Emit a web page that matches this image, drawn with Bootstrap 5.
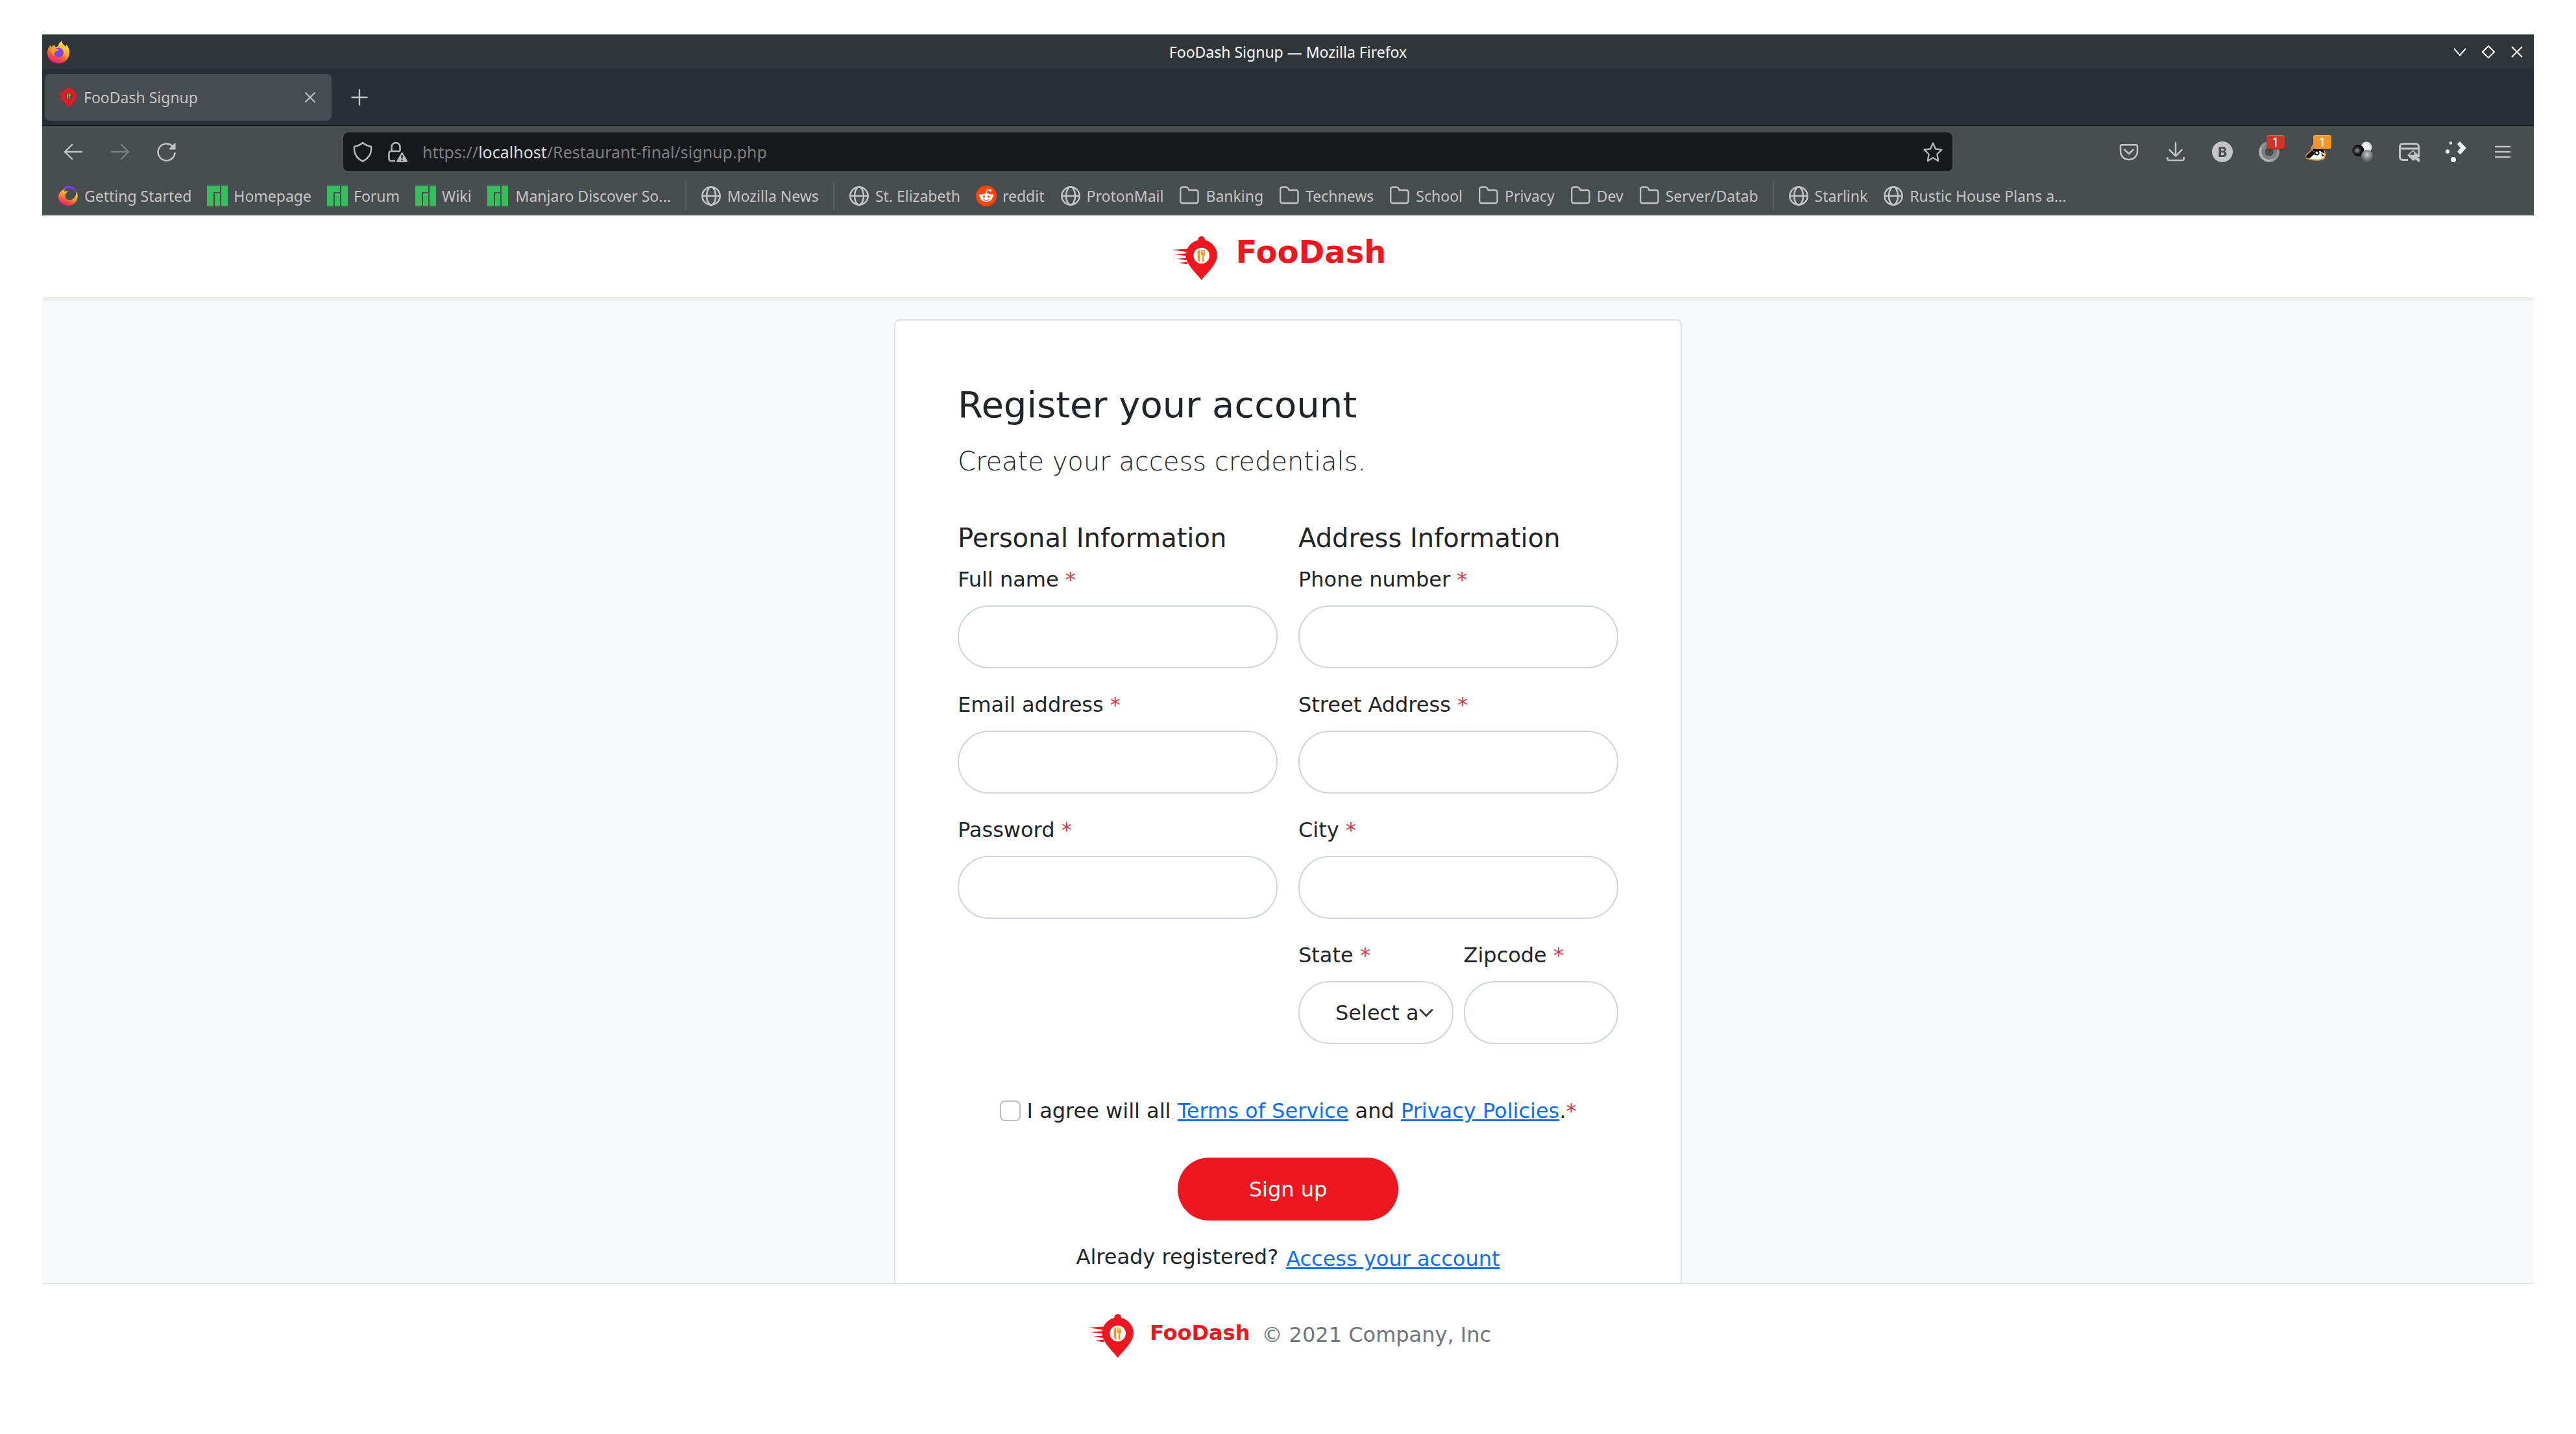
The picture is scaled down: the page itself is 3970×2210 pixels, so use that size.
<!DOCTYPE html>
<html lang="en">
<head>
<meta charset="utf-8">
<meta name="viewport" content="width=device-width, initial-scale=1">
<title>FooDash Signup</title>
<link href="https://cdn.jsdelivr.net/npm/bootstrap@5.3.0/dist/css/bootstrap.min.css" rel="stylesheet">
<style>
html{font-size:32px}
body{--bs-border-width:2px;font-family:"DejaVu Sans",sans-serif;background:#fff;color:#212529;min-height:100vh}
.win{margin:53px 65px 0}
.chrome-ui{font-family:"Noto Sans",sans-serif;font-size:23px;line-height:32px;color:#c4c4c4}
.chrome-ui button{background:none;border:0;padding:0;color:inherit;font:inherit}
.chrome-ui svg,.brand svg{display:block;flex:none}
.titlebar{height:53px;background:#31363b;color:#fcfcfc;border-top:1px solid #4a4e53;padding:0 8px;display:grid;grid-template-columns:1fr auto 1fr;align-items:center}
.titlebar .winbtns{gap:24px;padding-right:8px}
.tabstrip{height:88px;background:#2a2e36;border-bottom:1px solid #1c1e22;padding:8px 4px 7px}
.tab-item{--dish:#484d51;width:442px;height:72px;background:#484d51;border-radius:8px;padding:0 24px 0 16px;gap:11px}
.newtab{margin-left:30px}
.toolbar-main{background:#484d50;padding:10px 12px 0;height:80px}
.tool{width:72px;height:60px;display:flex;align-items:center;justify-content:center;position:relative}
.spring{flex:0 1 236px}
.urlbar{flex:1 1 0;height:60px;background:#18191c;border-radius:8px;box-shadow:0 0 0 2px #505458;padding:0 14px;gap:22px}
.urltext{color:#7c7f82;outline:0;font-size:25px}
.urltext b{font-weight:400;color:#dadbdc}
.count{position:absolute;left:32px;top:4px;width:28px;height:22px;border-radius:4px;color:#fff;font-size:20px;line-height:22px;text-align:center;box-shadow:inset 0 2px 0 rgba(255,255,255,.2),inset 0 -1px 0 rgba(0,0,0,.15),0 1px 2px rgba(0,0,0,.3)}
.count-red{background:#c8382b}
.count-orange{background:#f0962c}
.bookmarks{background:#484d50;height:58px;padding:0 12px;border-bottom:2px solid #505458}
.bm{display:flex;align-items:center;gap:9px;padding:0 12px;color:inherit;text-decoration:none;white-space:nowrap}
.bm-cut{gap:12px}
.vsep{width:2px;height:44px;background:#5d6165;margin:0 10px}
.site-head{height:126px;background:#fff;padding:32px 28px 0 0;box-shadow:0 4px 8px rgba(0,0,0,.075);clip-path:inset(0 0 -12px 0);position:relative}
.brand{color:#ee171f;font-weight:700;text-decoration:none;display:inline-flex;gap:28px}
.stage{background:#f7f9fb;padding-top:34px}
.signup{width:1214px;max-width:100%;background:#fff;border:2px solid #dee2e6;border-bottom:0;border-radius:8px 8px 0 0;padding:96px 96px 13px}
.signup h1{font-size:56px;margin-bottom:24px}
.signup .intro{font-size:40px;font-weight:200;line-height:60px;margin-bottom:64px}
.signup h2{font-size:40px;margin-bottom:16px}
.signup .form-label{line-height:48px;margin-bottom:16px;display:block}
.signup .form-control,.signup .form-select{height:97px;font-size:32px;border:2px solid #ced4da;border-radius:48px}
.signup .form-control{padding:16px 48px}
.signup .form-select{padding:16px 48px 16px 55px;background-size:32px 24px;background-position:right 24px center}
.fieldbox{margin-bottom:32px}
.req{color:#dc3545}
.signup a{color:#0d6efd}
.agree{gap:10px;margin-top:47px;line-height:48px}
.agree .form-check-input{width:32px;height:32px;margin:0;border:2px solid #bfbfbf;border-radius:8px;flex:none}
.btn-sign{width:340px;height:97px;border-radius:48px;background:#ee171f;color:#fff;font-size:32px;border:0;margin:48px auto 32px;display:block}
.btn-sign:hover{background:#d0141b;color:#fff}
.already{line-height:48px;gap:12px}
.already a{margin-top:3px}
.site-foot{border-top:2px solid #dee2e6;padding:46px 0 0 5px;color:#6c757d;line-height:48px;gap:18px}
.site-foot .brand{gap:24px}
.site-foot .note{padding-top:8px}
.site-foot .brand span{padding-top:5px}
</style>
<script src="https://cdn.jsdelivr.net/npm/bootstrap@5.3.0/dist/js/bootstrap.bundle.min.js"></script>
</head>
<body>
<svg width="0" height="0" class="position-absolute" aria-hidden="true">
<defs>
<linearGradient id="fx" x1=".8" y1="0" x2=".3" y2="1"><stop offset="0" stop-color="#fff44f"/><stop offset=".4" stop-color="#ffb02e"/><stop offset=".7" stop-color="#ff5a36"/><stop offset="1" stop-color="#e31587"/></linearGradient>
<radialGradient id="fxp"><stop offset="0" stop-color="#5b5bf0"/><stop offset="1" stop-color="#9a3be0"/></radialGradient>
<radialGradient id="bk" cx=".4" cy=".5"><stop offset="0" stop-color="#999"/><stop offset=".6" stop-color="#222"/><stop offset="1" stop-color="#000"/></radialGradient>
<radialGradient id="wh" cx=".5" cy=".45"><stop offset="0" stop-color="#fff"/><stop offset="1" stop-color="#d5d5d5"/></radialGradient>
<radialGradient id="gy" cx=".5" cy=".4"><stop offset="0" stop-color="#ccc"/><stop offset="1" stop-color="#666"/></radialGradient>
<symbol id="logo" viewBox="12 14 71 68"><g fill="#ee171f"><path d="M57.700 81.500C50 71 33.500 58 33.500 43.500a24.200 24.200 0 0 1 48.400 0C81.900 58 65.500 71 57.700 81.500z"/><circle cx="57.700" cy="19.300" r="5.300"/><path d="M12 35l24-1.500v5zM16 42l19-1.500v4zM20 48.700l16-1.500v4zM23 55l13-1.500v4z"/></g><circle cx="57.700" cy="44" r="12.300" style="fill:var(--dish,#fff)"/><path d="M55.300 35v18.500h-2.600V50h-1.200V40c0-3 1.500-5 3.800-5zM56.800 35h1.400v4.500h1v-4.500h1.400v4.500h1v-4.500h1.400V41c0 1.500-.8 2.500-1.800 2.800v9.700h-2.400v-9.700c-1.200-.3-2-1.300-2-2.800z" fill="#f7931e"/></symbol>
<symbol id="firefox" viewBox="0 0 34 35"><path d="M17 34.500C7 34.500 0 27.500 0 18.500c0-5 2-9 5-12 .2 1.500.8 2.500 1.800 3.200C8 7.500 9.500 6.500 11 6c-.2 2 .8 3.300 2.500 3.500l3-1.500c.5-3 2.500-6 5.500-8 0 4 3 5.500 6 9 .8-1 1-2 1-3.500 3.500 3.500 5 8 5 13 0 9-7 16-17 16z" fill="url(#fx)"/><circle cx="17.500" cy="18" r="7.500" fill="url(#fxp)"/><path d="M5 11c3-1 6-1 8 1.500 2 0 4 .5 4.500 1.500-1.500 2.500-5 2-6.500 4-1 2-.5 4 1 6C7 22 5 16 5 11z" fill="#ff9a20"/></symbol>
<symbol id="started" viewBox="0 0 32 32"><path d="M10 2c5-3 13-2 17 3s5 12 2 17c2-8-1-15-7-17-4-1.500-8-1-12 1z" fill="#7a3be8"/><path d="M11 5C5 8 1 12 1 18c0 8 7 13 15 13s14-6 14.500-13c.3-4-.5-7-2-9 .5 6-2 11-8 13-5 1-9-2-9-7 0-3 2-5 4-5-1-2-4-2-5 0-.5-2-.3-4 .5-5z" fill="url(#fx)"/></symbol>
<symbol id="manjaro" viewBox="0 0 32 32"><path d="M0 0h20v10H10v22H0zM12 12h8v20h-8zM22 0h10v32H22z" fill="#35bf5c"/></symbol>
<symbol id="globe" viewBox="0 0 32 32"><g fill="none" stroke="#c4c4c4" stroke-width="2.500"><circle cx="16" cy="16" r="13.700"/><ellipse cx="16" cy="16" rx="7" ry="13.700"/><path d="M2 16h28"/></g></symbol>
<symbol id="folder" viewBox="0 0 32 32"><path d="M2.200 24V5.500a3 3 0 0 1 3-3h6c1.500 0 2.500.7 3.200 2L15.500 7H26.500a3 3 0 0 1 3 3v14a3 3 0 0 1-3 3H5.200a3 3 0 0 1-3-3z" fill="none" stroke="#c4c4c4" stroke-width="2.300"/></symbol>
</defs>
</svg>

<div class="win">
<div class="chrome-ui">
  <div class="titlebar">
    <svg width="34" height="35"><use href="#firefox"/></svg>
    <span>FooDash Signup — Mozilla Firefox</span>
    <div class="winbtns d-flex justify-content-end">
      <button aria-label="Minimize"><svg width="20" height="20" fill="none" stroke="currentColor" stroke-width="2"><path d="M1 5l9 10 9-10"/></svg></button>
      <button aria-label="Maximize"><svg width="20" height="20" fill="none" stroke="currentColor" stroke-width="2"><path d="M10 1l9 9-9 9-9-9z"/></svg></button>
      <button aria-label="Close window"><svg width="20" height="20" fill="none" stroke="currentColor" stroke-width="2"><path d="M2 2l16 16M18 2L2 18"/></svg></button>
    </div>
  </div>
  <div class="tabstrip d-flex align-items-center">
    <div class="tab-item d-flex align-items-center">
      <svg width="33" height="32"><use href="#logo"/></svg>
      <span class="flex-grow-1">FooDash Signup</span>
      <button aria-label="Close tab"><svg width="18" height="18" fill="none" stroke="currentColor" stroke-width="2"><path d="M1.500 1.500l15 15M16.500 1.500l-15 15"/></svg></button>
    </div>
    <button class="newtab" aria-label="New tab"><svg width="26" height="26" fill="none" stroke="currentColor" stroke-width="2.400" stroke-linecap="round"><path d="M13 1.500v23M1.500 13h23"/></svg></button>
  </div>
  <div class="toolbar-main d-flex align-items-start">
    <button class="tool" aria-label="Back"><svg width="32" height="32" fill="none" stroke="currentColor" stroke-width="2.400" stroke-linecap="round" stroke-linejoin="round"><path d="M29 16H3M14 5L3 16l11 11"/></svg></button>
    <button class="tool" aria-label="Forward" disabled><svg width="32" height="32" fill="none" stroke="#7d8184" stroke-width="2.400" stroke-linecap="round" stroke-linejoin="round"><path d="M3 16h26M18 5l11 11-11 11"/></svg></button>
    <button class="tool" aria-label="Reload"><svg width="32" height="32"><path d="M28.500 18A13 13 0 1 1 24 6.500" fill="none" stroke="currentColor" stroke-width="2.500" stroke-linecap="round"/><path d="M29.500 3v9.500h-9c-.8 0-1-.8-.6-1.400l8.200-8.300c.6-.5 1.400-.4 1.400.2z" fill="currentColor"/></svg></button>
    <div class="spring"></div>
    <div class="urlbar d-flex align-items-center">
      <svg width="32" height="32" fill="none" stroke="#b4b5b6" stroke-width="2.500" stroke-linejoin="round"><path d="M16 2c3.500 3 8 5 13 6 .8 10-3.500 18-13 22.500C6.500 26 2.200 18 3 8c5-1 9.500-3 13-6z"/></svg>
      <svg width="32" height="32"><path d="M12 30H5.500a3 3 0 0 1-3-3V18a3 3 0 0 1 3-3h14.500M6.500 15V8.500a6.500 6.500 0 0 1 13 0V15" fill="none" stroke="#b4b5b6" stroke-width="2.500"/><path d="M21.500 17.500c.6-1 1.600-1 2.200 0l7.200 12.200c.6 1 .1 2.200-1.100 2.200H15.500c-1.200 0-1.700-1.200-1.100-2.200z" fill="#b4b5b6"/><path d="M22.600 21v5M22.600 28v2" stroke="#18191c" stroke-width="2.200"/></svg>
      <div class="urltext flex-grow-1" role="textbox" contenteditable="true" spellcheck="false" aria-label="Address">https://<b>localhost</b>/Restaurant-final/signup.php</div>
      <button aria-label="Bookmark this page"><svg width="32" height="32" fill="none" stroke="#b4b5b6" stroke-width="2.400" stroke-linejoin="round"><path d="M16 2.500l4 9 9.500 1.200-7 6.800L24 30l-8-5-8 5 1.500-10.500-7-6.800L12 11.500z"/></svg></button>
    </div>
    <div class="spring"></div>
    <button class="tool" aria-label="Save to Pocket"><svg width="32" height="32" fill="none" stroke="currentColor" stroke-width="2.500" stroke-linecap="round" stroke-linejoin="round"><path d="M5 5.200h22a2 2 0 0 1 2 2V15c0 8-6 13-13 13S3 23 3 15V7.200a2 2 0 0 1 2-2zM9 12.500l7 6.500 7-6.500"/></svg></button>
    <button class="tool" aria-label="Downloads"><svg width="32" height="32" fill="none" stroke="currentColor" stroke-width="2.500" stroke-linecap="round"><path d="M16 2v20M6.500 13l9.500 9.500 9.500-9.500M3.500 25v2a2 2 0 0 0 2 2h21a2 2 0 0 0 2-2v-2"/></svg></button>
    <button class="tool" aria-label="Account"><svg width="32" height="32"><circle cx="16" cy="16" r="16" fill="#c4c4c4"/><path fill-rule="evenodd" d="M10.500 8.500H17c3.200 0 5 1.500 5 4 0 1.600-.9 2.800-2.300 3.200 1.800.4 2.800 1.700 2.800 3.600 0 2.900-2 4.700-5.500 4.700h-6.500zM14 11.300v3h2.500c1.200 0 1.900-.5 1.900-1.500s-.7-1.500-1.900-1.500zM14 17v4.200h2.700c1.400 0 2.100-.7 2.100-2.100S18 17 16.700 17z" fill="#484d50"/></svg></button>
    <button class="tool" aria-label="Content blocker"><svg width="32" height="32"><circle cx="16" cy="16" r="11.500" fill="none" stroke="#969696" stroke-width="9"/><circle cx="16" cy="16" r="10" fill="none" stroke="#7d7d7d" stroke-width="4"/><path d="M4 10a13.500 13.500 0 0 0 18 18" fill="none" stroke="#b5b5b5" stroke-width="3"/></svg><span class="count count-red">1</span></button>
    <button class="tool" aria-label="Privacy Badger"><svg width="32" height="32"><path d="M1 21l8-7 2-8 6 5h10l4 9-3 7-9 2-10-1-7-2z" fill="#fff" stroke="#f08a24" stroke-width="2" stroke-linejoin="round"/><path d="M1 22l9-8 6 3-8 8-6 1zM11 11l8-1 9 2 1 7-6-4-6 0-6 0zM24 17l5 5-3 1z" fill="#111"/><circle cx="17.500" cy="17.500" r="3" fill="#fff" stroke="#111" stroke-width="2"/></svg><span class="count count-orange">1</span></button>
    <button class="tool" aria-label="Color extension"><svg width="32" height="32"><circle cx="22" cy="9" r="8.500" fill="url(#wh)"/><circle cx="9.500" cy="14" r="9" fill="url(#bk)"/><circle cx="23" cy="22" r="9" fill="url(#gy)"/></svg></button>
    <button class="tool" aria-label="Page cleaner"><svg width="32" height="32"><path d="M14 28.500H6A4.500 4.500 0 0 1 1.500 24V8A4.500 4.500 0 0 1 6 3.500h20A4.500 4.500 0 0 1 30.500 8v16M2 11h28" fill="none" stroke="currentColor" stroke-width="3"/><path d="M22 13l9 9-9 8-9-9z" fill="#c4c4c4"/><path d="M16 20.500l6-5.500 2 3-1.500 3z" fill="#484d50"/><path d="M26 25l5 4" stroke="#c4c4c4" stroke-width="5" stroke-linecap="round"/></svg></button>
    <button class="tool" aria-label="Extension"><svg width="32" height="32" fill="#f0f0f0"><circle cx="8" cy="2.500" r="2.200"/><circle cx="3" cy="15.500" r="3.200"/><circle cx="12" cy="28" r="4"/><path d="M18 4l4-4 10 10-9 10-5-4 5-6z"/></svg></button>
    <button class="tool" aria-label="Menu"><svg width="26" height="26" fill="none" stroke="currentColor" stroke-width="2.400" stroke-linecap="round"><path d="M2 5h22M2 13h22M2 21h22"/></svg></button>
  </div>
  <nav class="bookmarks d-flex align-items-center" aria-label="Bookmarks">
    <a class="bm" href="#"><svg width="32" height="32"><use href="#started"/></svg>Getting Started</a>
    <a class="bm" href="#"><svg width="32" height="32"><use href="#manjaro"/></svg>Homepage</a>
    <a class="bm" href="#"><svg width="32" height="32"><use href="#manjaro"/></svg>Forum</a>
    <a class="bm" href="#"><svg width="32" height="32"><use href="#manjaro"/></svg>Wiki</a>
    <a class="bm bm-cut" href="#"><svg width="32" height="32"><use href="#manjaro"/></svg>Manjaro Discover So...</a>
    <span class="vsep"></span>
    <a class="bm" href="#"><svg width="32" height="32"><use href="#globe"/></svg>Mozilla News</a>
    <span class="vsep"></span>
    <a class="bm" href="#"><svg width="32" height="32"><use href="#globe"/></svg>St. Elizabeth</a>
    <a class="bm" href="#"><svg width="32" height="32"><circle cx="16" cy="16" r="16" fill="#ff4500"/><g fill="#fff"><ellipse cx="16" cy="18.500" rx="9.500" ry="6.500"/><circle cx="7" cy="15.500" r="2.300"/><circle cx="25" cy="15.500" r="2.300"/><circle cx="22" cy="7.500" r="2"/></g><path d="M16 12l1.500-6 4.500 1.200" fill="none" stroke="#fff" stroke-width="1.200"/><circle cx="12.500" cy="17" r="1.700" fill="#ff4500"/><circle cx="19.500" cy="17" r="1.700" fill="#ff4500"/><path d="M12 21.500c2 1.700 6 1.700 8 0" fill="none" stroke="#ff4500" stroke-width="1.200"/></svg>reddit</a>
    <a class="bm" href="#"><svg width="32" height="32"><use href="#globe"/></svg>ProtonMail</a>
    <a class="bm" href="#"><svg width="32" height="32"><use href="#folder"/></svg>Banking</a>
    <a class="bm" href="#"><svg width="32" height="32"><use href="#folder"/></svg>Technews</a>
    <a class="bm" href="#"><svg width="32" height="32"><use href="#folder"/></svg>School</a>
    <a class="bm" href="#"><svg width="32" height="32"><use href="#folder"/></svg>Privacy</a>
    <a class="bm" href="#"><svg width="32" height="32"><use href="#folder"/></svg>Dev</a>
    <a class="bm" href="#"><svg width="32" height="32"><use href="#folder"/></svg>Server/Datab</a>
    <span class="vsep"></span>
    <a class="bm" href="#"><svg width="32" height="32"><use href="#globe"/></svg>Starlink</a>
    <a class="bm" href="#"><svg width="32" height="32"><use href="#globe"/></svg>Rustic House Plans a...</a>
  </nav>
</div>

<header class="site-head text-center">
  <a class="brand fs-4 lh-1" href="#"><svg width="71" height="68"><use href="#logo"/></svg><span>FooDash</span></a>
</header>

<main class="stage d-flex justify-content-center">
  <form class="signup" onsubmit="return false">
    <h1 class="fw-normal">Register your account</h1>
    <p class="intro">Create your access credentials.</p>
    <div class="row gx-3">
      <div class="col-6">
        <h2 class="fw-normal">Personal Information</h2>
        <div class="fieldbox"><label class="form-label" for="fname">Full name <span class="req">*</span></label><input class="form-control" id="fname" type="text"></div>
        <div class="fieldbox"><label class="form-label" for="email">Email address <span class="req">*</span></label><input class="form-control" id="email" type="email"></div>
        <div class="fieldbox"><label class="form-label" for="pass">Password <span class="req">*</span></label><input class="form-control" id="pass" type="password"></div>
      </div>
      <div class="col-6">
        <h2 class="fw-normal">Address Information</h2>
        <div class="fieldbox"><label class="form-label" for="phone">Phone number <span class="req">*</span></label><input class="form-control" id="phone" type="tel"></div>
        <div class="fieldbox"><label class="form-label" for="street">Street Address <span class="req">*</span></label><input class="form-control" id="street" type="text"></div>
        <div class="fieldbox"><label class="form-label" for="city">City <span class="req">*</span></label><input class="form-control" id="city" type="text"></div>
        <div class="row gx-2">
          <div class="col-6 fieldbox"><label class="form-label" for="state">State <span class="req">*</span></label><select class="form-select" id="state"><option>Select a State</option></select></div>
          <div class="col-6 fieldbox"><label class="form-label" for="zip">Zipcode <span class="req">*</span></label><input class="form-control" id="zip" type="text"></div>
        </div>
      </div>
    </div>
    <div class="agree d-flex align-items-center justify-content-center">
      <input class="form-check-input" type="checkbox" id="agree">
      <label for="agree">I agree will all <a href="#">Terms of Service</a> and <a href="#">Privacy Policies</a>.<span class="req">*</span></label>
    </div>
    <button class="btn btn-sign" type="submit">Sign up</button>
    <div class="already d-flex justify-content-center"><span>Already registered?</span><a href="#">Access your account</a></div>
  </form>
</main>

<footer class="site-foot d-flex justify-content-center">
  <a class="brand" href="#"><svg width="71" height="68"><use href="#logo"/></svg><span>FooDash</span></a>
  <span class="note">© 2021 Company, Inc</span>
</footer>
</div>
</body>
</html>
